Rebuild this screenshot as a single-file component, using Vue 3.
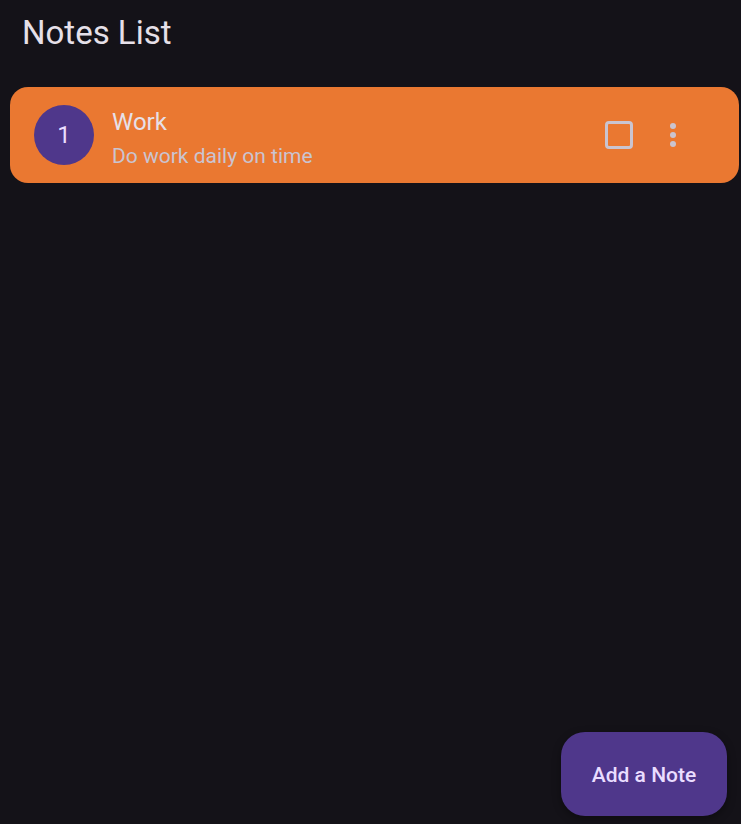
<script setup>
import { ref } from 'vue'

const notes = ref([
  { id: 1, title: 'Work', description: 'Do work daily on time', done: false },
])
</script>

<template>
  <div class="page">
    <header class="app-bar">
      <h1>Notes List</h1>
    </header>

    <main>
      <ul class="notes">
        <li v-for="(note, index) in notes" :key="note.id" class="note">
          <span class="avatar">{{ index + 1 }}</span>
          <div class="text">
            <label class="title" :for="`note-${note.id}`">{{ note.title }}</label>
            <p class="description">{{ note.description }}</p>
          </div>
          <div class="actions">
            <input :id="`note-${note.id}`" v-model="note.done" class="check" type="checkbox" />
            <button class="menu" type="button" aria-label="Show menu">
              <svg viewBox="0 0 24 24" width="36" height="36" aria-hidden="true">
                <circle cx="12" cy="6" r="2" />
                <circle cx="12" cy="12" r="2" />
                <circle cx="12" cy="18" r="2" />
              </svg>
            </button>
          </div>
        </li>
      </ul>
    </main>

    <footer>
      <button class="add" type="button">Add a Note</button>
    </footer>
  </div>
</template>

<style>
body {
  background: #141218;
}
</style>

<style scoped>
.page {
  box-sizing: border-box;
  min-height: 100vh;
  display: flex;
  flex-direction: column;
  background: #141218;
  color: #e6e0e9;
  font-family: Roboto, "Liberation Sans", sans-serif;
}

.app-bar {
  padding: 12px 22px 33px;
}

h1 {
  margin: 0;
  font-size: 33px;
  font-weight: 400;
  line-height: 42px;
}

main {
  flex: 1;
}

.notes {
  display: grid;
  gap: 12px;
  margin: 0;
  padding: 0 2px 0 10px;
  list-style: none;
}

.note {
  box-sizing: border-box;
  min-height: 96px;
  display: flex;
  align-items: center;
  gap: 18px;
  padding: 8px 48px 8px 24px;
  border-radius: 18px;
  background: #ea7831;
}

.avatar {
  flex: none;
  width: 60px;
  height: 60px;
  display: grid;
  place-items: center;
  border-radius: 50%;
  background: #4f378b;
  color: #eaddff;
  font-size: 24px;
}

.text {
  flex: 1;
  min-width: 0;
  padding-top: 6px;
}

.title {
  display: block;
  font-size: 24px;
  line-height: 36px;
}

.description {
  margin: 0;
  color: #cac4d0;
  font-size: 21px;
  line-height: 32px;
}

.actions {
  display: flex;
  align-items: center;
  gap: 22px;
}

.check {
  appearance: none;
  width: 28px;
  height: 28px;
  margin: 0;
  border: 3px solid #cac4d0;
  border-radius: 4px;
  cursor: pointer;
}

.check:checked {
  background: #cac4d0;
}

.menu {
  display: grid;
  padding: 0;
  border: 0;
  background: none;
  fill: #cac4d0;
  cursor: pointer;
}

footer {
  display: flex;
  justify-content: flex-end;
  padding: 8px 14px;
}

.add {
  min-width: 166px;
  height: 84px;
  padding: 2px 30px 0;
  border: 0;
  border-radius: 24px;
  background: #4f378b;
  box-shadow: 0 3px 8px rgba(0, 0, 0, 0.35);
  color: #eaddff;
  font-family: inherit;
  font-size: 21px;
  font-weight: 500;
  cursor: pointer;
}
</style>
